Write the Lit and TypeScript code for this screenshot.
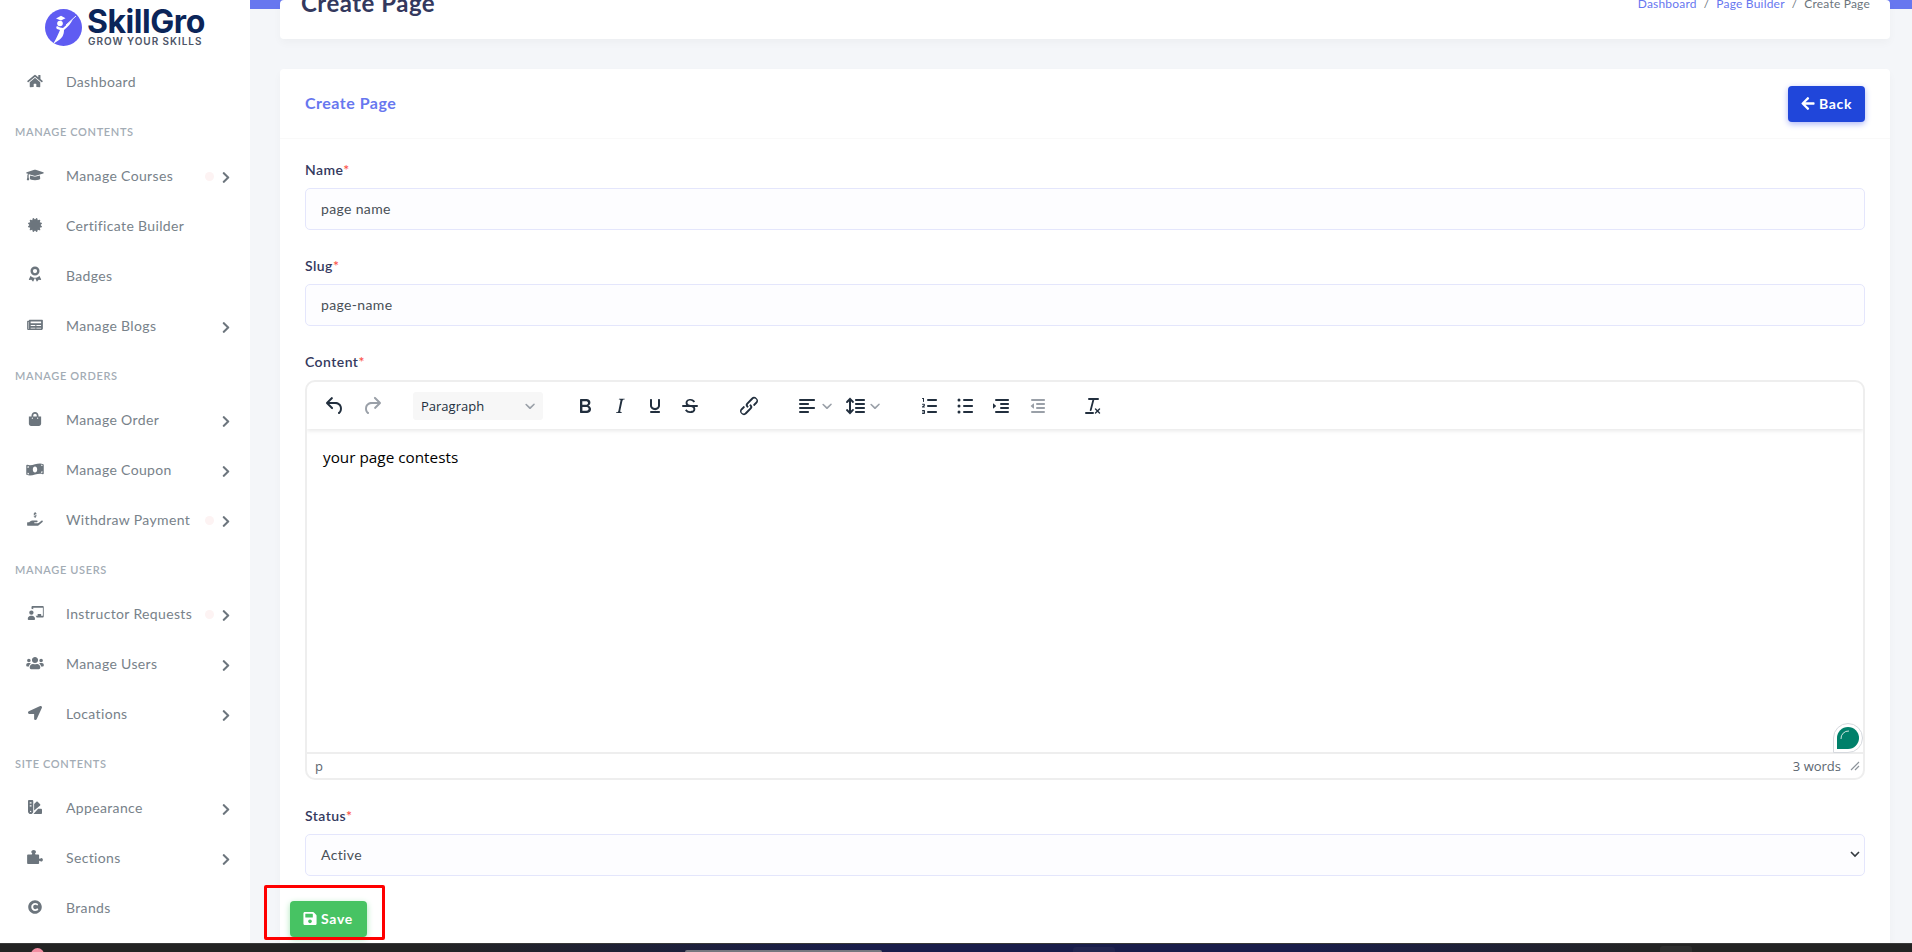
import { LitElement, html, css } from "lit";
import { customElement } from "lit/decorators.js";

const fa = (vb: string, d: string, cls = "ic") =>
  html`<svg class=${cls} viewBox=${vb} fill="currentColor"><path d=${d}></path></svg>`;

const ICONS: Record<string, any> = {
  home: fa("0 0 576 512", "M280.37 148.26L96 300.11V464a16 16 0 0 0 16 16l112.06-.29a16 16 0 0 0 15.92-16V368a16 16 0 0 1 16-16h64a16 16 0 0 1 16 16v95.64a16 16 0 0 0 16 16.05L464 480a16 16 0 0 0 16-16V300L295.67 148.26a12.19 12.19 0 0 0-15.3 0zM571.6 251.47L488 182.56V44.05a12 12 0 0 0-12-12h-56a12 12 0 0 0-12 12v72.61L318.47 43a48 48 0 0 0-61 0L4.34 251.47a12 12 0 0 0-1.6 16.9l25.5 31A12 12 0 0 0 45.15 301l235.22-193.74a12.19 12.19 0 0 1 15.3 0L530.9 301a12 12 0 0 0 16.9-1.6l25.5-31a12 12 0 0 0-1.7-16.93z"),
  cap: fa("0 0 640 512", "M622.34 153.2L343.4 67.5c-15.2-4.67-31.6-4.67-46.79 0L17.66 153.2c-23.54 7.23-23.54 38.36 0 45.59l48.63 14.94c-10.67 13.19-17.23 29.28-17.88 46.9C38.78 266.15 32 276.11 32 288c0 10.78 5.68 19.85 13.86 25.65L20.33 428.53C18.11 438.52 25.71 448 35.94 448h56.11c10.24 0 17.84-9.48 15.62-19.47L82.14 313.65C90.32 307.85 96 298.78 96 288c0-11.57-6.47-21.25-15.66-26.87.76-15.02 8.44-28.3 20.69-36.72L296.6 284.5c9.06 2.78 26.44 6.25 46.79 0l278.95-85.7c23.55-7.24 23.55-38.36 0-45.6zM352.79 315.09c-28.53 8.76-52.84 3.92-65.59 0l-145.02-44.55L128 384c0 35.35 85.96 64 192 64s192-28.65 192-64l-14.18-113.47-145.03 44.56z"),
  cert: fa("0 0 512 512", "M458.622 255.92l45.985-45.005c13.708-12.977 7.316-36.039-10.664-40.339l-62.65-15.99 17.661-62.015c4.991-17.838-11.829-34.663-29.661-29.671l-61.994 17.667-15.984-62.671C337.085.197 313.765-6.276 300.99 7.228L256 53.57 211.011 7.229c-12.63-13.351-36.047-7.234-40.325 10.668l-15.984 62.671-61.995-17.667C74.87 57.907 58.056 74.738 63.046 92.572l17.661 62.015-62.65 15.99C.069 174.878-6.31 197.944 7.392 210.915l45.985 45.005-45.985 45.004c-13.708 12.977-7.316 36.039 10.664 40.339l62.65 15.99-17.661 62.015c-4.991 17.838 11.829 34.663 29.661 29.671l61.994-17.667 15.984 62.671c4.439 18.575 27.696 24.018 40.325 10.668L256 458.61l44.989 46.001c12.5 13.488 35.987 7.486 40.325-10.668l15.984-62.671 61.994 17.667c17.836 4.994 34.651-11.837 29.661-29.671l-17.661-62.015 62.65-15.99c17.987-4.302 24.366-27.367 10.664-40.339l-45.984-45.004z"),
  award: fa("0 0 384 512", "M192 16a136 136 0 1 1 0 272 136 136 0 0 1 0-272zm0 72a64 64 0 1 0 0 128 64 64 0 0 0 0-128zM60 292l-52 110c-4 9 3 18 13 17l62-6 38 50c6 8 18 7 22-2l50-106c-50 0-100-22-133-63zm264 0c-33 41-83 63-133 63l50 106c4 9 16 10 22 2l38-50 62 6c10 1 17-8 13-17z", "ic tall"),
  news: fa("0 0 576 512", "M552 64H88c-13.3 0-24 10.7-24 24v8H24c-13.3 0-24 10.7-24 24v272c0 26.5 21.5 48 48 48h472c30.9 0 56-25.1 56-56V88c0-13.3-10.7-24-24-24zM56 400a8 8 0 0 1-8-8V144h16v248a8 8 0 0 1-8 8zm236-16H140c-6.6 0-12-5.4-12-12v-8c0-6.6 5.4-12 12-12h152c6.6 0 12 5.4 12 12v8c0 6.6-5.4 12-12 12zm208 0H348c-6.6 0-12-5.4-12-12v-8c0-6.6 5.4-12 12-12h152c6.6 0 12 5.4 12 12v8c0 6.6-5.4 12-12 12zM292 288H140c-6.6 0-12-5.4-12-12v-8c0-6.6 5.4-12 12-12h152c6.6 0 12 5.4 12 12v8c0 6.6-5.4 12-12 12zm208 0H348c-6.6 0-12-5.4-12-12v-8c0-6.6 5.4-12 12-12h152c6.6 0 12 5.4 12 12v8c0 6.6-5.4 12-12 12zm0-96H140c-6.6 0-12-5.4-12-12v-40c0-6.6 5.4-12 12-12h360c6.6 0 12 5.4 12 12v40c0 6.6-5.4 12-12 12z"),
  bag: fa("0 0 448 512", "M352 160v-32C352 57.42 294.579 0 224 0 153.42 0 96 57.42 96 128v32H0v272c0 44.183 35.817 80 80 80h288c44.183 0 80-35.817 80-80V160h-96zm-192-32c0-35.29 28.71-64 64-64s64 28.71 64 64v32H160v-32zm160 120c-13.255 0-24-10.745-24-24s10.745-24 24-24 24 10.745 24 24-10.745 24-24 24zm-192 0c-13.255 0-24-10.745-24-24s10.745-24 24-24 24 10.745 24 24-10.745 24-24 24z"),
  money: fa("0 0 640 512", "M622 78c-39-16-78-23-117-23-124 0-248 63-372 63-31 0-63-4-94-15C19 97 0 108 0 128v318c0 10 6 19 18 24 39 16 78 23 117 23 124 0 248-63 372-63 31 0 63 4 94 15 20 6 39-5 39-25V102c0-10-6-19-18-24zM48 158c20 3 41 4 56 3 0 30-25 55-56 55zm0 286v-48c31 0 56 23 56 51-21 1-40 0-56-3zm272-60c-44 0-80-47-80-112s36-112 80-112 80 47 80 112-36 112-80 112zm272 9c-16-3-36-5-56-4 0-26 25-48 56-48zm0-243c-28 0-51-20-55-46 19 0 39 2 55 5z"),
  hand: fa("0 0 576 512", "M272 200V176c-18-2-33-14-36-31-1-5 3-9 8-9h14c4 0 7 2 9 5 3 3 6 4 10 4h25c4 0 8-3 8-8 0-3-2-6-5-7l-33-10c-21-6-35-25-33-46 2-18 17-33 33-35V16c0-9 7-16 16-16h8c9 0 16 7 16 16v23c18 2 33 14 36 31 1 5-3 9-8 9h-14c-4 0-7-2-9-5-3-3-6-4-10-4h-25c-4 0-8 3-8 8 0 3 2 6 5 7l38 11c18 6 31 24 28 44-2 18-17 33-33 35v25c0 9-7 16-16 16h-8c-9 0-16-7-16-16zM565 320c-12-11-30-10-42 0l-92 74c-11 9-25 14-40 14H272c-9 0-16-7-16-16s7-16 16-16h78c16 0 31-11 33-27 3-20-13-37-32-37H192c-27 0-53 9-74 26l-46 38H16c-9 0-16 7-16 16v96c0 9 7 16 16 16h357c15 0 29-5 40-14l151-121c15-12 16-35 1-49z"),
  teach: fa("0 0 640 512", "M208 352c-2 0-3 0-5 1-5 1-10 3-15 3-5 0-10-2-15-3-2-1-3-1-5-1-62 0-112 50-112 112v16c0 18 14 32 32 32h200c18 0 32-14 32-32v-16c0-62-50-112-112-112zm-20-32a80 80 0 1 0 0-160 80 80 0 0 0 0 160zM608 0H224c-18 0-32 15-32 33v63c24 0 46 7 64 19V64h352v288h-64v-64H416v64h-76c19 17 33 38 40 64h228c18 0 32-15 32-33V33c0-18-14-33-32-33z"),
  users: fa("0 0 640 512", "M96 224c35.3 0 64-28.7 64-64s-28.7-64-64-64-64 28.7-64 64 28.7 64 64 64zm448 0c35.3 0 64-28.7 64-64s-28.7-64-64-64-64 28.7-64 64 28.7 64 64 64zm32 32h-64c-17.6 0-33.5 7.1-45.1 18.6 40.3 22.1 68.9 62 75.1 109.4h66c17.7 0 32-14.3 32-32v-32c0-35.3-28.7-64-64-64zm-256 0c61.9 0 112-50.1 112-112S381.9 32 320 32 208 82.1 208 144s50.1 112 112 112zm76.8 32h-8.3c-20.8 10-43.9 16-68.5 16s-47.6-6-68.5-16h-8.3C179.6 288 128 339.6 128 403.2V432c0 26.5 21.5 48 48 48h288c26.5 0 48-21.5 48-48v-28.8c0-63.6-51.6-115.2-115.2-115.2zm-223.7-13.4C161.5 263.1 145.6 256 128 256H64c-35.3 0-64 28.7-64 64v32c0 17.7 14.3 32 32 32h65.9c6.3-47.4 34.9-87.3 75.2-109.4z"),
  loc: fa("0 0 512 512", "M444.52 3.52L28.74 195.42c-47.97 22.39-31.98 92.75 19.19 92.75h175.91v175.91c0 51.17 70.36 67.17 92.75 19.19l191.9-415.78c15.99-38.39-25.59-79.97-63.97-63.97z"),
  swatch: fa("0 0 512 512", "M0 32C0 14 14 0 32 0h128c18 0 32 14 32 32v384c0 53-43 96-96 96S0 469 0 416zm64 48v48h64V80zm0 112v48h64v-48zM96 440a24 24 0 1 0 0-48 24 24 0 0 0 0 48zM224 380V150l84-84c12-12 33-12 45 0l91 91c12 12 12 33 0 45zM480 320c18 0 32 14 32 32v128c0 18-14 32-32 32H200l170-192z"),
  puzzle: fa("0 0 576 512", "M519 288c-32 0-32 35-57 35-13 0-24-13-24-24V192c0-18-14-32-32-32h-90c-14 0-26-12-26-26 0-26 34-28 34-60C324 33 287 0 240 0s-88 33-88 74c0 32 34 34 34 60 0 14-12 26-26 26H32c-18 0-32 14-32 32v288c0 18 14 32 32 32h374c18 0 32-14 32-32v-67c0-12 11-24 24-24 25 0 25 35 57 35 30 0 57-28 57-68s-27-68-57-68z"),
  copy: fa("0 0 512 512", "M256 8C119.033 8 8 119.033 8 256s111.033 248 248 248 248-111.033 248-248S392.967 8 256 8zm117.134 346.753c-1.592 1.867-39.776 45.731-109.851 45.731-84.692 0-144.484-63.26-144.484-145.567 0-81.303 62.004-143.401 143.762-143.401 66.957 0 101.965 37.315 103.422 38.904a12 12 0 0 1 1.238 14.623l-22.383 34.655c-4.049 6.267-12.774 7.351-18.234 2.295-.233-.214-26.529-23.88-61.88-23.88-46.116 0-73.916 33.575-73.916 76.082 0 39.602 25.514 79.692 74.277 79.692 38.697 0 65.28-28.338 65.544-28.625 5.132-5.565 14.059-5.033 18.508 1.053l24.547 33.572a12.001 12.001 0 0 1-.55 14.866z"),
};

const CHEV = "M285.476 272.971L91.132 467.314c-9.373 9.373-24.569 9.373-33.941 0l-22.667-22.667c-9.357-9.357-9.375-24.522-.04-33.901L188.505 256 34.484 101.255c-9.335-9.379-9.317-24.544.04-33.901l22.667-22.667c9.373-9.373 24.569-9.373 33.941 0L285.475 239.03c9.373 9.372 9.373 24.568.001 33.941z";
const ARROW = "M257.5 445.1l-22.2 22.2c-9.4 9.4-24.6 9.4-33.9 0L7 273c-9.4-9.4-9.4-24.6 0-33.9L201.4 44.7c9.4-9.4 24.6-9.4 33.9 0l22.2 22.2c9.5 9.5 9.3 25-.4 34.3L136.6 216H424c13.3 0 24 10.7 24 24v32c0 13.3-10.7 24-24 24H136.6l120.5 114.8c9.8 9.3 10 24.8.4 34.3z";
const SAVE = "M433.941 129.941l-83.882-83.882A48 48 0 0 0 316.118 32H48C21.49 32 0 53.49 0 80v352c0 26.51 21.49 48 48 48h352c26.51 0 48-21.49 48-48V163.882a48 48 0 0 0-14.059-33.941zM224 416c-35.346 0-64-28.654-64-64 0-35.346 28.654-64 64-64s64 28.654 64 64c0 35.346-28.654 64-64 64zm96-304.52V212c0 6.627-5.373 12-12 12H76c-6.627 0-12-5.373-12-12V108c0-6.627 5.373-12 12-12h228.52c3.183 0 6.235 1.264 8.485 3.515l3.48 3.48A11.996 11.996 0 0 1 320 111.48z";

const T: Record<string, string> = {
  undo: "M6.4 8H12c3.7 0 6.2 2 6.8 5.1.6 2.7-.4 5.6-2.3 6.8a1 1 0 0 1-1-1.8c1.1-.6 1.8-2.7 1.4-4.6-.5-2.1-2.1-3.5-4.9-3.5H6.4l3.3 3.3a1 1 0 1 1-1.4 1.4l-5-5a1 1 0 0 1 0-1.4l5-5a1 1 0 0 1 1.4 1.4L6.4 8Z",
  redo: "M17.6 10H12c-2.8 0-4.4 1.4-4.9 3.5-.4 2 .3 4 1.4 4.6a1 1 0 1 1-1 1.8c-2-1.2-2.9-4.1-2.3-6.8.6-3 3-5.1 6.8-5.1h5.6l-3.3-3.3a1 1 0 1 1 1.4-1.4l5 5a1 1 0 0 1 0 1.4l-5 5a1 1 0 0 1-1.4-1.4l3.3-3.3Z",
  bold: "M7.8 19c-.3 0-.5 0-.6-.2l-.2-.5V5.7c0-.2 0-.4.2-.5l.6-.2h5c1.5 0 2.7.3 3.5 1 .7.6 1.1 1.4 1.1 2.5a3 3 0 0 1-.6 1.9c-.4.6-1 1-1.6 1.2.4.1.9.3 1.3.6s.8.7 1 1.2c.4.4.5 1 .5 1.6 0 1.3-.4 2.3-1.3 3-.8.7-2.1 1-3.8 1H7.8Zm5-8.3c.6 0 1.2-.1 1.6-.5.4-.3.6-.7.6-1.3 0-1.1-.8-1.7-2.3-1.7H9.3v3.5h3.4Zm.5 6c.7 0 1.3-.1 1.7-.4.4-.4.6-.9.6-1.5s-.2-1-.7-1.4c-.4-.3-1-.4-2-.4H9.4v3.8h4Z",
  italic: "M16.7 4.7l-.1.9h-.3c-.6 0-1 0-1.4.3-.3.3-.4.6-.5 1.1l-2.1 9.8v.6c0 .5.4.8 1.4.8h.2l-.2.8H8l.2-.8h.2c1.1 0 1.8-.5 2-1.5l2-9.8.1-.5c0-.6-.4-.8-1.4-.8h-.3l.2-.9h5.8Z",
  underline: "M16 5c.6 0 1 .4 1 1v5.5a4 4 0 0 1-.4 1.8l-1 1.4a5.3 5.3 0 0 1-5.5 1 5 5 0 0 1-1.6-1c-.5-.4-.8-.9-1.1-1.4a4 4 0 0 1-.4-1.8V6c0-.6.4-1 1-1s1 .4 1 1v5.5c0 .3 0 .6.2 1l.6.7a3.3 3.3 0 0 0 2.2.8 3.4 3.4 0 0 0 2.2-.8c.3-.2.4-.5.6-.8l.2-.9V6c0-.6.4-1 1-1ZM8 17h8c.6 0 1 .4 1 1s-.4 1-1 1H8a1 1 0 0 1 0-2Z",
  strike: "M15.6 8.5c-.5-.7-1-1.1-1.3-1.3-.6-.4-1.3-.6-2-.6-2.7 0-2.8 1.7-2.8 2.1 0 1.6 1.8 2 3.2 2.3 4.4.9 4.6 2.8 4.6 3.9 0 1.4-.7 4.1-5 4.1A6.2 6.2 0 0 1 7 16.4l1.5-1.1c.4.6 1.6 2 3.7 2 1.6 0 2.5-.4 3-1.2.4-.8.3-2-.8-2.6-.7-.4-1.6-.7-2.9-1-1-.2-3.9-.8-3.9-3.6C7.6 6 10.3 5 12.4 5c2.9 0 4.2 1.6 4.7 2.4l-1.5 1.1ZM5 11h14a1 1 0 0 1 0 2H5a1 1 0 0 1 0-2Z",
  link: "M6.2 12.3a1 1 0 0 1 1.4 1.4l-2 2a2 2 0 1 0 2.6 2.8l4.8-4.8a1 1 0 0 0 0-1.4 1 1 0 1 1 1.4-1.3 2.9 2.9 0 0 1 0 4L9.6 20a3.9 3.9 0 0 1-5.5-5.5l2-2Zm11.6-.6a1 1 0 0 1-1.4-1.4l2-2a2 2 0 1 0-2.6-2.8L11 10.3a1 1 0 0 0 0 1.4A1 1 0 1 1 9.6 13a2.9 2.9 0 0 1 0-4L14.4 4a3.9 3.9 0 0 1 5.5 5.5l-2 2Z",
  align: "M5 5h14c.6 0 1 .4 1 1s-.4 1-1 1H5a1 1 0 1 1 0-2Zm0 4h8c.6 0 1 .4 1 1s-.4 1-1 1H5a1 1 0 1 1 0-2Zm0 8h8c.6 0 1 .4 1 1s-.4 1-1 1H5a1 1 0 0 1 0-2Zm0-4h14c.6 0 1 .4 1 1s-.4 1-1 1H5a1 1 0 0 1 0-2Z",
  lineh: "M21 5a1 1 0 0 1 .1 2H13a1 1 0 0 1-.1-2H21zm0 4a1 1 0 0 1 .1 2H13a1 1 0 0 1-.1-2H21zm0 4a1 1 0 0 1 .1 2H13a1 1 0 0 1-.1-2H21zm0 4a1 1 0 0 1 .1 2H13a1 1 0 0 1-.1-2H21zM7 3.6l3.7 3.7a1 1 0 0 1-1.3 1.5h-.1L8 7.3v9.2l1.3-1.3a1 1 0 0 1 1.3 0h.1c.4.4.4 1 0 1.3v.1L7 20.4l-3.7-3.7a1 1 0 0 1 1.3-1.5h.1L6 16.7V7.4L4.7 8.7a1 1 0 0 1-1.3 0h-.1a1 1 0 0 1 0-1.3v-.1L7 3.6z",
  ol: "M10 17h8c.6 0 1 .4 1 1s-.4 1-1 1h-8a1 1 0 0 1 0-2Zm0-6h8c.6 0 1 .4 1 1s-.4 1-1 1h-8a1 1 0 0 1 0-2Zm0-6h8c.6 0 1 .4 1 1s-.4 1-1 1h-8a1 1 0 1 1 0-2ZM6 4v3.5c0 .3-.2.5-.5.5a.5.5 0 0 1-.5-.5V5h-.5a.5.5 0 0 1 0-1H6Zm-1 8.8.2-.2h1.3c.3 0 .5.2.5.4s-.2.6-.5.6H4.4a.4.4 0 0 1-.4-.4c0-.4.2-.9.6-1.2l1.1-.8c.1 0 .3-.2.3-.3 0-.1-.2-.2-.4-.2H4.5a.5.5 0 0 1 0-1h1.2c.7 0 1.3.5 1.3 1.2 0 .4-.3.9-.7 1.2l-1.1.8-.2.2ZM7 17v2c0 .6-.4 1-1 1H4.5a.5.5 0 0 1 0-1h1.2c.2 0 .3-.1.3-.3 0-.2-.1-.3-.3-.3H4.4a.4.4 0 1 1 0-.8h1.3c.2 0 .3-.1.3-.3 0-.2-.1-.3-.3-.3H4.5a.5.5 0 1 1 0-1H6c.6 0 1 .4 1 1Z",
  ul: "M11 5h8c.6 0 1 .4 1 1s-.4 1-1 1h-8a1 1 0 0 1 0-2Zm0 6h8c.6 0 1 .4 1 1s-.4 1-1 1h-8a1 1 0 0 1 0-2Zm0 6h8c.6 0 1 .4 1 1s-.4 1-1 1h-8a1 1 0 0 1 0-2ZM4.5 6a1 1 0 1 1 3 0 1 1 0 0 1-3 0Zm0 6a1 1 0 1 1 3 0 1 1 0 0 1-3 0Zm0 6a1 1 0 1 1 3 0 1 1 0 0 1-3 0Z",
  indent: "M7 5h12c.6 0 1 .4 1 1s-.4 1-1 1H7a1 1 0 1 1 0-2Zm5 4h7c.6 0 1 .4 1 1s-.4 1-1 1h-7a1 1 0 0 1 0-2Zm0 4h7c.6 0 1 .4 1 1s-.4 1-1 1h-7a1 1 0 0 1 0-2Zm-5 4h12a1 1 0 0 1 0 2H7a1 1 0 0 1 0-2Zm-2.6-2.6 2.8-2.4-2.8-2.4c-.3-.2-.4-.1-.4.2v4.4c0 .3.1.4.4.2Z",
  outdent: "M7 5h12c.6 0 1 .4 1 1s-.4 1-1 1H7a1 1 0 1 1 0-2Zm5 4h7c.6 0 1 .4 1 1s-.4 1-1 1h-7a1 1 0 0 1 0-2Zm0 4h7c.6 0 1 .4 1 1s-.4 1-1 1h-7a1 1 0 0 1 0-2Zm-5 4h12a1 1 0 0 1 0 2H7a1 1 0 0 1 0-2Zm1.4-2.6L5.6 12l2.8-2.4c.3-.2.6-.1.6.2v4.4c0 .3-.3.4-.6.2Z",
  clear: "M13.2 6a1 1 0 0 1 0 .2l-2.6 10a1 1 0 0 1-1 .8h-.2a.8.8 0 0 1-.6-1l2.6-10H8a1 1 0 1 1 0-2h9a1 1 0 0 1 0 2h-3.8ZM5 18h7a1 1 0 0 1 0 2H5a1 1 0 0 1 0-2Zm13 1.5L16.5 18 15 19.5a.7.7 0 0 1-1-1l1.5-1.5-1.5-1.5a.7.7 0 0 1 1-1l1.5 1.5 1.5-1.5a.7.7 0 0 1 1 1L17.5 17l1.5 1.5a.7.7 0 0 1-1 1Z",
};

const tb = (name: string, cls = "") =>
  html`<span class="tb ${cls}"><svg viewBox="0 0 24 24" fill="currentColor"><path d=${T[name]}></path></svg></span>`;
const caret = html`<svg class="caret" viewBox="0 0 10 10" fill="currentColor"><path d="M.6 2.9a.8.8 0 0 1 1.1 0L5 6.1l3.3-3.2a.8.8 0 1 1 1.1 1.1L5.5 7.9a.8.8 0 0 1-1 0L.6 4a.8.8 0 0 1 0-1.1Z"></path></svg>`;

type Row =
  | { h: string }
  | { i: string; t: string; sub?: boolean; dot?: boolean };

const MENU: Row[] = [
  { i: "home", t: "Dashboard" },
  { h: "Manage Contents" },
  { i: "cap", t: "Manage Courses", sub: true, dot: true },
  { i: "cert", t: "Certificate Builder" },
  { i: "award", t: "Badges" },
  { i: "news", t: "Manage Blogs", sub: true },
  { h: "Manage Orders" },
  { i: "bag", t: "Manage Order", sub: true },
  { i: "money", t: "Manage Coupon", sub: true },
  { i: "hand", t: "Withdraw Payment", sub: true, dot: true },
  { h: "Manage Users" },
  { i: "teach", t: "Instructor Requests", sub: true, dot: true },
  { i: "users", t: "Manage Users", sub: true },
  { i: "loc", t: "Locations", sub: true },
  { h: "Site Contents" },
  { i: "swatch", t: "Appearance", sub: true },
  { i: "puzzle", t: "Sections", sub: true },
  { i: "copy", t: "Brands" },
];

@customElement("app-root")
export class AppRoot extends LitElement {
  static styles = css`
    :host {
      display: flex;
      flex-direction: column;
      height: 952px;
      overflow: hidden;
      font-family: "Lato", "Open Sans", sans-serif;
      font-size: 14px;
      color: #6c757d;
      letter-spacing: 0.35px;
    }
    * { box-sizing: border-box; }
    .shell { flex: 1; display: flex; min-height: 0; }
    .side { width: 250px; flex: none; background: #fff; overflow: hidden; }
    .logo { height: 57px; display: flex; padding: 9px 0 0 45px; gap: 5px; }
    .mark { width: 37px; height: 37px; flex: none; }
    .brand { display: flex; flex-direction: column; letter-spacing: 0; }
    .brand b { display: block; font: 700 32px/25px "Inter", sans-serif; color: #0b2559; letter-spacing: -0.45px; }
    .brand span { display: block; font: 600 10px/12px "Inter", sans-serif; color: #4d5567; letter-spacing: 0.95px; margin: 1px 0 0 1px; }
    .item { height: 50px; display: flex; align-items: center; padding-left: 25px; color: #78828a; }
    .item .ic { width: 20px; height: 14px; flex: none; color: #6c757d; margin-bottom: 3px; }
    .item .ic.tall { height: 17px; }
    .item .lbl { margin-left: 21px; flex: 1; white-space: nowrap; padding-bottom: 2px; }
    .dot { width: 9px; height: 9px; border-radius: 50%; background: #fdf3f3; flex: none; margin-right: 8px; }
    .chev { width: 8px; height: 13px; flex: none; margin: 2px 20px 0 0; color: #6c757d; }
    .hd { height: 44px; padding: 18px 0 0 15px; font-size: 11px; line-height: 13px; font-weight: 600; text-transform: uppercase; letter-spacing: 0.65px; color: #a3acb5; white-space: nowrap; }

    .main { flex: 1; min-width: 0; padding: 0 22px 0 30px; background: linear-gradient(#6777ef, #6777ef) top / 100% 9px no-repeat, #f4f6f9; }
    .card { background: #fff; border-radius: 4px; box-shadow: 0 4px 8px rgba(0, 0, 0, 0.03); }
    .head { height: 39px; margin-bottom: 30px; display: flex; justify-content: space-between; align-items: flex-end; padding: 0 20px 19px 21px; }
    .head h1 { margin: 0; font-size: 24px; line-height: 34px; font-weight: 700; color: #34395e; letter-spacing: 0.5px; }
    .crumb { font-size: 12px; line-height: 18px; margin-bottom: 7px; white-space: nowrap; display: flex; gap: 7px; color: #6c757d; letter-spacing: 0.2px; }
    .crumb a { color: #6777ef; }

    .form { height: 920px; }
    .form-h { height: 70px; padding: 0 25px; display: flex; align-items: center; justify-content: space-between; border-bottom: 1px solid #f9f9f9; }
    .form-h h4 { margin: 0 0 2px; font-size: 16px; font-weight: 700; color: #6777ef; letter-spacing: 0.5px; }
    .btn { display: inline-flex; align-items: center; justify-content: center; gap: 4px; height: 36px; width: 77px; border-radius: 4px; color: #fff; font-weight: 700; font-size: 14px; letter-spacing: 0.7px; }
    .back { background: #2046da; box-shadow: 0 2px 6px #acb5f6; }
    .back svg { width: 14px; height: 15px; }
    .body { padding: 20px 25px 0; }
    .fg { margin-bottom: 25px; }
    label { display: block; height: 21px; line-height: 21px; margin-bottom: 8px; font-weight: 600; color: #34395e; letter-spacing: 0.45px; }
    label i { font-style: normal; color: #fc544b; }
    .in { height: 42px; background: #fdfdff; border: 1px solid #e4e6fc; border-radius: 5px; padding: 0 15px 2px; display: flex; align-items: center; color: #495057; justify-content: space-between; }
    .in svg { width: 12px; height: 12px; margin-right: -12px; color: #343a40; }

    .ed { height: 400px; border: 2px solid #eee; border-radius: 10px; display: flex; flex-direction: column; overflow: hidden; position: relative; color: #222f3e; font-family: "Open Sans", sans-serif; letter-spacing: 0; }
    .bar { height: 47px; flex: none; display: flex; align-items: center; padding-left: 10.5px; box-shadow: 0 2px 4px rgba(0, 0, 0, 0.09); position: relative; }
    .tb { width: 35px; height: 28px; display: flex; align-items: center; justify-content: center; flex: none; color: #222f3e; }
    .tb svg { width: 24px; height: 24px; }
    .tb.off { color: #9aa0a8; }
    .tb.n { width: 30px; }
    .caret { width: 10px; height: 10px; color: #9aa0a8; flex: none; }
    .redo { margin-left: 2px; }
    .sel { width: 130px; height: 28px; margin: 0 24.5px 0 23.5px; background: #f7f7f7; border-radius: 3px; display: flex; align-items: center; justify-content: space-between; padding: 0 8px; font-size: 13px; color: #222f3e; flex: none; }
    .g { display: flex; align-items: center; flex: none; }
    .g-link { margin-left: 24px; }
    .g-align { margin-left: 25.5px; }
    .g-align .lh { margin-left: 8px; }
    .g-list { margin-left: 32px; }
    .g-list .tb + .tb { margin-left: 0.7px; }
    .g-clear { margin-left: 21px; }
    .txt { flex: 1; padding: 16px 16px; font-size: 15.3px; line-height: 24px; color: #000; }
    .status { height: 26px; flex: none; border-top: 2px solid #eee; display: flex; align-items: center; justify-content: space-between; padding: 0 3px 0 8px; font-size: 13px; color: #5c6670; }
    .status div { display: flex; align-items: center; gap: 9px; }
    .grip { width: 10px; height: 10px; }
    .bubble { position: absolute; right: 0; bottom: 25px; width: 30px; height: 30px; border-radius: 50% 50% 50% 0; background: #fff; border: 1px solid #d6d9de; display: flex; align-items: center; justify-content: center; }
    .bubble svg { width: 22px; height: 22px; }

    .foot { margin-left: -15px; position: relative; width: 77px; }
    .save { background: #47c363; box-shadow: 0 2px 6px #a8e6b8; padding: 0 1px 2px 0; }
    .save svg { width: 14px; height: 15px; }
    .mark-box { position: absolute; left: -26px; top: -16px; width: 121px; height: 55px; border: 3px solid #f00; border-radius: 2px; pointer-events: none; }

    .task { height: 9px; flex: none; position: relative; overflow: hidden; background: linear-gradient(90deg, #232323 0, #232323 420px, #191d4a 860px, #191d4a 1300px, #232323 1640px, #232323 100%); border-top: 1px solid #3a3a3a; }
    .task .app { position: absolute; left: 31px; top: 4px; width: 13px; height: 13px; border-radius: 50%; background: #f08ca0; }
    .task .tab { position: absolute; left: 685px; top: 6px; width: 197px; height: 3px; background: #77777f; border-radius: 2px 2px 0 0; }
    .task .chip { position: absolute; height: 10px; background: #22254f; border-radius: 3px; }
    .task .c1 { left: 1073px; top: 3px; width: 42px; }
    .task .c2 { left: 1660px; top: 2px; width: 32px; background: #2e2e2e; }
  `;

  private renderRow(r: Row) {
    if ("h" in r) return html`<div class="hd">${r.h}</div>`;
    return html`<div class="item">
      ${ICONS[r.i]}
      <span class="lbl">${r.t}</span>
      ${r.dot ? html`<span class="dot"></span>` : ""}
      ${r.sub ? fa("0 0 320 512", CHEV, "chev") : ""}
    </div>`;
  }

  render() {
    return html`
      <div class="shell">
        <aside class="side">
          <div class="logo">
            <svg class="mark" viewBox="0 0 37 37">
              <circle cx="18.5" cy="18.5" r="18.5" fill="#5f5cf2"></circle>
              <path d="M8 35c3-5 5-9 7-14l-3-1c-1-1-1-2 0-3 2 1 4 2 6 2l10-9c-2 4-5 8-9 11 0 5-2 8-5 10-2 1-4 3-6 4Z" fill="#fff"></path>
              <circle cx="15" cy="14.5" r="2.8" fill="#fff"></circle>
              <path d="M11 9.5l5-2.8 4.5 2.6-4.5 2.2Z" fill="#fff"></path>
              <path d="M21 16 31 7" stroke="#fff" stroke-width="0.9"></path>
            </svg>
            <div class="brand"><b>SkillGro</b><span>GROW YOUR SKILLS</span></div>
          </div>
          ${MENU.map((r) => this.renderRow(r))}
        </aside>
        <main class="main">
          <section class="card head">
            <h1>Create Page</h1>
            <div class="crumb"><a>Dashboard</a><span>/</span><a>Page Builder</a><span>/</span><span>Create Page</span></div>
          </section>
          <section class="card form">
            <div class="form-h">
              <h4>Create Page</h4>
              <span class="btn back">${fa("0 0 448 512", ARROW)}Back</span>
            </div>
            <div class="body">
              <div class="fg"><label>Name<i>*</i></label><div class="in">page name</div></div>
              <div class="fg"><label>Slug<i>*</i></label><div class="in">page-name</div></div>
              <div class="fg">
                <label>Content<i>*</i></label>
                <div class="ed">
                  <div class="bar">
                    ${tb("undo")}${tb("redo", "off redo")}
                    <div class="sel">Paragraph ${caret}</div>
                    <div class="g">${tb("bold")}${tb("italic")}${tb("underline")}${tb("strike")}</div>
                    <div class="g g-link">${tb("link")}</div>
                    <div class="g g-align">${tb("align", "n")}${caret}${tb("lineh", "n lh")}${caret}</div>
                    <div class="g g-list">${tb("ol")}${tb("ul")}${tb("indent")}${tb("outdent", "off")}</div>
                    <div class="g g-clear">${tb("clear")}</div>
                  </div>
                  <div class="txt">your page contests</div>
                  <div class="status">
                    <span>p</span>
                    <div>3 words
                      <svg class="grip" viewBox="0 0 10 10" stroke="#8d949b" stroke-width="1.2"><path d="M1 9 9 1M5 9 9 5"></path></svg>
                    </div>
                  </div>
                  <div class="bubble">
                    <svg viewBox="0 0 22 22"><path d="M0 22V11a11 11 0 1 1 11 11Z" fill="#00806a"></path><path d="M4 12a7.5 7.5 0 0 1 8-8" fill="none" stroke="#cfe6e0" stroke-width="1"></path></svg>
                  </div>
                </div>
              </div>
              <div class="fg">
                <label>Status<i>*</i></label>
                <div class="in">Active
                  <svg viewBox="0 0 12 12" fill="none" stroke="currentColor" stroke-width="1.6"><path d="M2 4l4 4 4-4"></path></svg>
                </div>
              </div>
              <div class="foot">
                <span class="btn save">${fa("0 0 448 512", SAVE)}Save</span>
                <div class="mark-box"></div>
              </div>
            </div>
          </section>
        </main>
      </div>
      <div class="task"><span class="app"></span><span class="tab"></span><span class="chip c1"></span><span class="chip c2"></span></div>
    `;
  }
}
